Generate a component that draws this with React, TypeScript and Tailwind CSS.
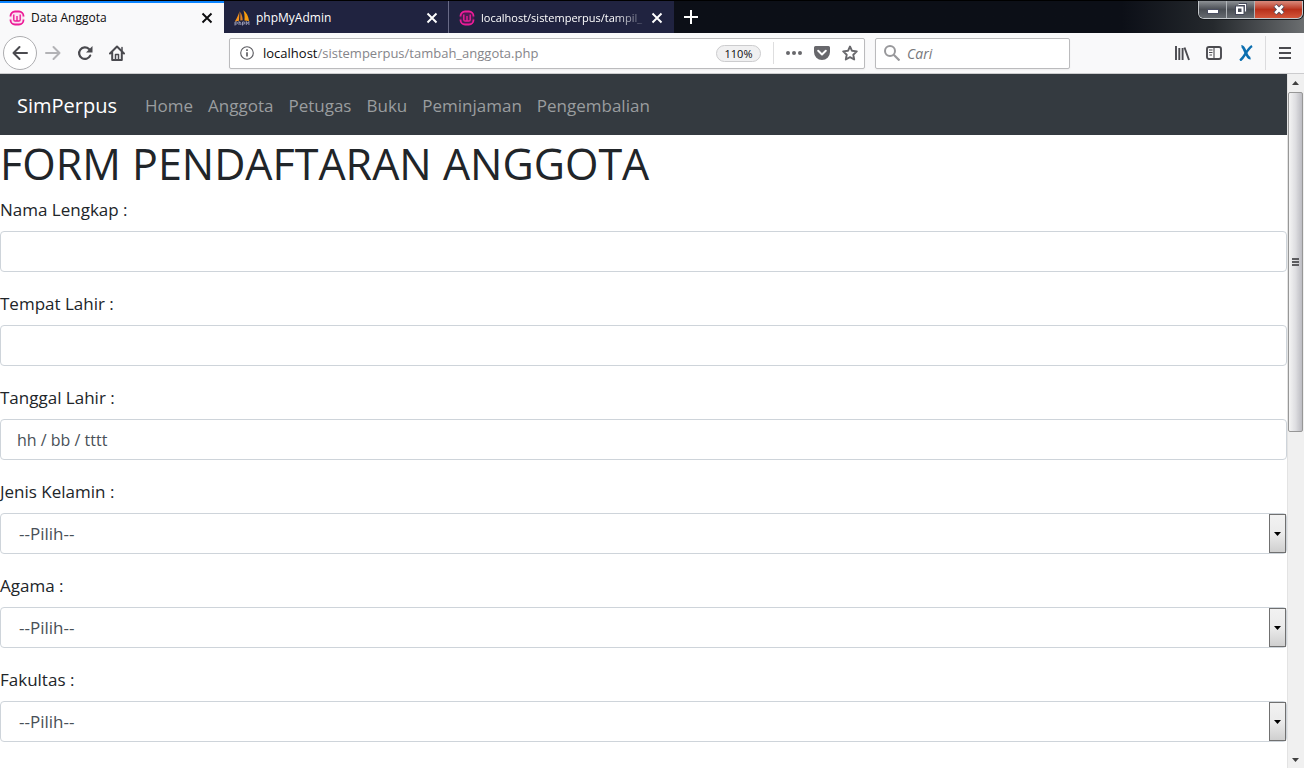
import type { ReactNode } from "react";

function WampIcon({ ring = "#fbe3f1" }: { ring?: string }) {
  return (
    <svg viewBox="0 0 16 16" className="size-4 shrink-0" aria-hidden="true">
      <rect x="0.8" y="0.8" width="14.4" height="14.4" rx="5.5" fill={ring} />
      <path d="M1.500 6.400V6A4.500 4.500 0 0 1 6 1.500h4A4.500 4.500 0 0 1 14.500 6v.4M1.500 9.600v.4A4.500 4.500 0 0 0 6 14.500h4a4.500 4.500 0 0 0 4.500-4.500v-.4" fill="none" stroke="#ec1c98" strokeWidth="1.800" />
      <path d="M4.800 4.500v5.200q0 1.300 1.300 1.300h3.800q1.300 0 1.300-1.300V4.500M8 6v5" fill="none" stroke="#ec1c98" strokeWidth="1.400" />
    </svg>
  );
}

function SailIcon() {
  return (
    <svg viewBox="0 0 16 16" className="size-4 shrink-0" aria-hidden="true">
      <path d="M5.500 1C4.600 4.500 3 8 .8 11.500l4.200-.8z" fill="#f7941d" />
      <path d="M6.300 2v8.500l2.400-.3C8.500 7 7.800 4 6.300 2z" fill="#d9822b" />
      <path d="M9.400.3c3.100 2.200 4.900 5.700 5.700 10.700l-4.600-.5C10.800 6.500 10.400 3 9.400.3z" fill="#f89c0e" />
      <path d="M1 15.500V12h1.500q1 .2 1 1t-1 1H1M5 11v4m0-2.200q1.800-1.200 1.800.4V15M8.500 15.500V12H10q1 .2 1 1t-1 1H8.500M12.300 15v-3.500l1.300 2 1.300-2V15" fill="none" stroke="#a3a4bd" strokeWidth="0.900" />
    </svg>
  );
}

function CloseIcon() {
  return (
    <svg viewBox="0 0 12 12" className="size-3" aria-hidden="true">
      <path d="M1.500 1.500l9 9m0-9l-9 9" stroke="currentColor" strokeWidth="1.900" fill="none" />
    </svg>
  );
}

type TabProps = { icon: ReactNode; title: string; active?: boolean; long?: boolean };

function Tab({ icon, title, active = false, long = false }: TabProps) {
  return (
    <div
      role="tab"
      aria-selected={active}
      className={
        active
          ? "flex w-56 items-center border-t-2 border-[#0a84ff] bg-[#f9f9fa] pr-2 pl-[9px] text-[#0c0c0d]"
          : "flex w-[225px] items-center border-r border-[#686a86] bg-[#202340] pt-0.5 pr-[7px] pl-[10px] text-white last-of-type:border-transparent"
      }
    >
      {icon}
      <span
        className={
          long
            ? "ml-1.5 flex-1 mask-r-from-80% text-[11px] whitespace-nowrap"
            : "ml-1.5 flex-1 text-xs whitespace-nowrap"
        }
      >
        {title}
      </span>
      <button type="button" aria-label="Tutup tab" className="flex size-[18px] items-center justify-center">
        <CloseIcon />
      </button>
    </div>
  );
}

function WindowButtons() {
  return (
    <div className="flex h-[18px] w-[105px] overflow-hidden rounded-b-md border border-t-0 border-[#c5c9cc] shadow-[0_0_0_1px_#15181c]">
      <button type="button" aria-label="Minimalkan" className="flex w-7 items-end justify-center border-r border-[#b0b4b8] bg-linear-to-b from-[#8d9195] via-[#4a4e54] via-50% to-[#666b70] pb-1">
        <svg viewBox="0 0 12 5" className="h-[5px] w-3">
          <rect x="0.500" y="0.500" width="11" height="4" fill="#fff" stroke="#4b4f62" />
        </svg>
      </button>
      <button type="button" aria-label="Pulihkan" className="flex w-7 items-center justify-center border-r border-[#b0b4b8] bg-linear-to-b from-[#8d9195] via-[#4a4e54] via-50% to-[#666b70] pb-0.5">
        <svg viewBox="0 0 12 12" className="size-3">
          <path d="M4 1.500h6.500V8M1.500 4.500h6v6h-6z" fill="none" stroke="#44485a" strokeWidth="3.500" />
          <path d="M3.500 1.500h7V8.500" fill="none" stroke="#fff" strokeWidth="1.200" />
          <path d="M2 4.500h5.500V10H2z" fill="none" stroke="#fff" strokeWidth="2" />
        </svg>
      </button>
      <button type="button" aria-label="Tutup" className="flex flex-1 items-center justify-center bg-linear-to-b from-[#d98a7c] via-[#b8301a] via-50% to-[#d4553a]">
        <svg viewBox="0 0 12 11" className="h-[11px] w-3">
          <path d="M2 1.500l8 8m0-8l-8 8" stroke="#5a4a58" strokeWidth="4.600" />
          <path d="M2.300 1.800l7.400 7.400m0-7.400l-7.400 7.400" stroke="#fff" strokeWidth="2.800" />
        </svg>
      </button>
    </div>
  );
}

function TabBar() {
  return (
    <div className="flex h-[33px] justify-between border-t border-black bg-linear-to-r from-[#0c0f17] from-86% via-[#25292d] via-93% to-[#6b6e70] pr-px">
      <div role="tablist" className="flex">
        <Tab active title="Data Anggota" icon={<WampIcon />} />
        <Tab title="phpMyAdmin" icon={<SailIcon />} />
        <Tab long title="localhost/sistemperpus/tampil_" icon={<WampIcon ring="#4b1c52" />} />
        <button type="button" aria-label="Tab baru" className="flex w-[34px] items-center justify-center text-white">
          <svg viewBox="0 0 14 14" className="size-[14px]">
            <path d="M7 0v14M0 7h14" stroke="currentColor" strokeWidth="2" />
          </svg>
        </button>
      </div>
      <WindowButtons />
    </div>
  );
}

function Toolbar() {
  return (
    <div className="flex h-[41px] items-center border-b border-[#ccccce] bg-[#f9f9fa] pl-[3px] text-[#4a4a4f]">
      <button type="button" aria-label="Kembali" className="flex size-[34px] items-center justify-center rounded-full border border-[#adadb0] bg-white">
        <svg viewBox="0 0 16 16" className="size-4" fill="none" stroke="currentColor" strokeWidth="2" strokeLinecap="round" strokeLinejoin="round">
          <path d="M15 8H1.500M7.500 2L1.500 8l6 6" />
        </svg>
      </button>
      <button type="button" aria-label="Maju" className="flex size-8 items-center justify-center text-[#b3b3b6]">
        <svg viewBox="0 0 16 16" className="size-4" fill="none" stroke="currentColor" strokeWidth="2" strokeLinecap="round" strokeLinejoin="round">
          <path d="M1 8h13.500M8.500 2l6 6-6 6" />
        </svg>
      </button>
      <button type="button" aria-label="Muat ulang" className="flex size-8 items-center justify-center">
        <svg viewBox="0 0 16 16" className="size-4">
          <path d="M13.200 10.600A5.800 5.800 0 1 1 12 4" fill="none" stroke="currentColor" strokeWidth="2.200" strokeLinecap="round" />
          <path d="M15.500 1v6.500H9z" fill="currentColor" />
        </svg>
      </button>
      <button type="button" aria-label="Beranda" className="flex size-8 items-center justify-center">
        <svg viewBox="0 0 16 16" className="size-4" fill="none" stroke="currentColor" strokeWidth="2" strokeLinejoin="round" strokeLinecap="round">
          <path d="M1 8.500l7-7 7 7M3.200 7.500V15h9.600V7.500" />
          <path d="M6.500 14V9.500h3V14M13 2.500v3" strokeWidth="1.500" />
        </svg>
      </button>

      <div className="ml-24 flex h-[31px] flex-1 items-center rounded-xs border border-[#bbbbbd] bg-white shadow-xs">
        <button type="button" aria-label="Info situs" className="flex w-[33px] items-center justify-center">
          <svg viewBox="0 0 16 16" className="size-[14px]">
            <circle cx="8" cy="8" r="7.200" fill="none" stroke="#5c5c61" strokeWidth="1.300" />
            <path d="M8 7v5M8 3.700v2" stroke="#5c5c61" strokeWidth="1.900" />
          </svg>
        </button>
        <div className="flex-1 pt-0.5 text-[13px] whitespace-nowrap text-[#85858a]">
          <span className="text-[#0c0c0d]">localhost</span>/sistemperpus/tambah_anggota.php
        </div>
        <button type="button" className="h-[17px] w-[45px] rounded-full border border-[#ccccce] bg-[#f0f0f1] text-[11px] leading-[15px] text-[#0c0c0d]">
          110%
        </button>
        <div className="ml-3 h-[22px] w-px bg-[#dededf]" />
        <button type="button" aria-label="Tindakan halaman" className="ml-1.5 flex w-7 justify-center">
          <svg viewBox="0 0 16 4" className="h-1 w-4" fill="#68686c">
            <circle cx="2" cy="2" r="2" />
            <circle cx="8" cy="2" r="2" />
            <circle cx="14" cy="2" r="2" />
          </svg>
        </button>
        <button type="button" aria-label="Simpan ke Pocket" className="flex w-7 justify-center">
          <svg viewBox="0 0 16 16" className="size-4">
            <path d="M1.500 1h13A1.500 1.500 0 0 1 16 2.500V7A8 8 0 0 1 0 7V2.500A1.500 1.500 0 0 1 1.500 1z" fill="#68686c" />
            <path d="M4.200 5.800L8 9.400l3.800-3.600" fill="none" stroke="#fff" strokeWidth="2" strokeLinecap="round" strokeLinejoin="round" />
          </svg>
        </button>
        <button type="button" aria-label="Markah" className="flex w-7 justify-center">
          <svg viewBox="0 0 16 16" className="size-4">
            <path d="M8 1.500l2 4.300 4.800.6-3.500 3.300.9 4.800L8 12.200l-4.200 2.300.9-4.800L1.200 6.400 6 5.800z" fill="none" stroke="#68686c" strokeWidth="1.900" strokeLinejoin="round" />
          </svg>
        </button>
      </div>

      <label className="ml-[10px] flex h-[31px] w-[195px] items-center rounded-xs border border-[#bbbbbd] bg-white pl-2 shadow-xs">
        <svg viewBox="0 0 16 16" className="size-4 shrink-0" fill="none" stroke="#98989b" strokeWidth="2">
          <circle cx="6" cy="6" r="5" />
          <path d="M9.700 9.700L15.500 15.500" strokeWidth="2.200" />
        </svg>
        <input aria-label="Cari" placeholder="Cari" className="ml-[7px] w-full pt-0.5 text-sm italic outline-none placeholder:text-[#77777b]" />
      </label>

      <div className="ml-24 flex items-center">
        <button type="button" aria-label="Pustaka" className="flex size-8 items-center justify-center">
          <svg viewBox="0 0 16 16" className="size-4" fill="none" stroke="currentColor" strokeWidth="1.900">
            <path d="M2 1v14M5.300 3v12M8.600 3v12M10.500 2.500L15 15" />
          </svg>
        </button>
        <button type="button" aria-label="Bilah samping" className="flex size-8 items-center justify-center">
          <svg viewBox="0 0 16 16" className="size-4" fill="none" stroke="currentColor" strokeWidth="1.900">
            <rect x="1" y="2" width="14" height="12" rx="2" />
            <path d="M8 2v12M3 5h3.500M3 7.500h3.500M3.500 10H6" strokeWidth="1.100" />
          </svg>
        </button>
        <button type="button" aria-label="Ekstensi" className="flex size-8 items-center justify-center">
          <svg viewBox="0 0 16 16" className="size-4" fill="none" stroke="#0c6fb0">
            <path d="M3.500 1.500C7 1 8 14 12.500 13" strokeWidth="2.800" />
            <path d="M14 1C9 4 6 13 2 15.500" strokeWidth="2.400" />
          </svg>
        </button>
        <div className="ml-[3px] flex h-[34px] items-center border-l border-[#dcdcde] pl-[3px]">
          <button type="button" aria-label="Menu" className="flex size-8 items-center justify-center">
            <svg viewBox="0 0 12 12" className="size-3">
              <path d="M0 1h12M0 6h12M0 11h12" stroke="currentColor" strokeWidth="2" />
            </svg>
          </button>
        </div>
        <div className="w-[3px]" />
      </div>
    </div>
  );
}

const links = ["Home", "Anggota", "Petugas", "Buku", "Peminjaman", "Pengembalian"];

function Navbar() {
  return (
    <nav className="flex h-[61px] items-center bg-[#343a40] px-[17px] pt-0.5">
      <a href="#" className="mr-7 text-xl text-white">
        SimPerpus
      </a>
      <ul className="flex gap-[15px]">
        {links.map((link) => (
          <li key={link}>
            <a href="#" className="text-[17px] text-[#9a9d9f]">
              {link}
            </a>
          </li>
        ))}
      </ul>
    </nav>
  );
}

type FieldDef = { id: string; label: string; kind: "text" | "date" | "select" };

const fields: FieldDef[] = [
  { id: "nama", label: "Nama Lengkap :", kind: "text" },
  { id: "tempat", label: "Tempat Lahir :", kind: "text" },
  { id: "tanggal", label: "Tanggal Lahir :", kind: "date" },
  { id: "kelamin", label: "Jenis Kelamin :", kind: "select" },
  { id: "agama", label: "Agama :", kind: "select" },
  { id: "fakultas", label: "Fakultas :", kind: "select" },
  { id: "jurusan", label: "Jurusan :", kind: "select" },
];

const controlClass =
  "block h-[41px] w-full appearance-none rounded-[4px] border border-[#ced4da] bg-white text-[#495057] outline-none placeholder:text-[#495057]";

function Field({ id, label, kind }: FieldDef) {
  return (
    <div className="mb-[19px]">
      <label htmlFor={id} className="mb-2 block text-[17px] leading-[26px]">
        {label}
      </label>
      {kind === "select" ? (
        <div className="relative">
          <select id={id} className={`${controlClass} px-[18px] text-[17px]`}>
            <option>--Pilih--</option>
          </select>
          <span className="pointer-events-none absolute inset-y-px right-px flex w-[17px] items-center justify-center border border-[#707070] bg-linear-to-b from-[#f2f2f2] via-[#ebebeb] via-50% to-[#cfcfcf]">
            <svg viewBox="0 0 7 4" className="h-1 w-[7px]">
              <path d="M0 0h7L3.500 4z" fill="#000" />
            </svg>
          </span>
        </div>
      ) : (
        <input id={id} type="text" placeholder={kind === "date" ? "hh / bb / tttt" : undefined} className={`${controlClass} px-4 text-base`} />
      )}
    </div>
  );
}

function Scrollbar() {
  return (
    <div aria-hidden="true" className="flex w-[17px] shrink-0 flex-col items-center border-l border-[#e3e3e3] bg-[#f0f0f0] pr-px">
      <div className="flex h-[18px] items-center">
        <svg viewBox="0 0 7 4" className="h-1 w-[7px]">
          <path d="M0 4h7L3.500 0z" fill="#404040" />
        </svg>
      </div>
      <div className="flex h-[49%] w-[15px] flex-col items-center justify-center gap-px rounded-xs border border-[#979797] bg-linear-to-r from-[#f4f4f4] via-[#dedee1] to-[#bcbcc2]">
        <div className="h-0.5 w-[7px] bg-[#5d5d60]" />
        <div className="h-0.5 w-[7px] bg-[#5d5d60]" />
        <div className="h-0.5 w-[7px] bg-[#5d5d60]" />
      </div>
      <div className="mt-auto flex h-[17px] items-center">
        <svg viewBox="0 0 7 4" className="h-1 w-[7px]">
          <path d="M0 0h7L3.500 4z" fill="#404040" />
        </svg>
      </div>
    </div>
  );
}

export default function App() {
  return (
    <div className="flex h-screen flex-col overflow-hidden bg-white font-['Open_Sans',sans-serif] text-[#212529]">
      <header className="shrink-0">
        <TabBar />
        <Toolbar />
      </header>
      <div className="flex min-h-0 flex-1">
        <main className="min-w-0 flex-1 overflow-hidden">
          <Navbar />
          <h1 className="mb-1.5 pt-0.5 text-[43px] leading-[54px]">FORM PENDAFTARAN ANGGOTA</h1>
          <form>
            {fields.map((field) => (
              <Field key={field.id} {...field} />
            ))}
          </form>
        </main>
        <Scrollbar />
      </div>
    </div>
  );
}
